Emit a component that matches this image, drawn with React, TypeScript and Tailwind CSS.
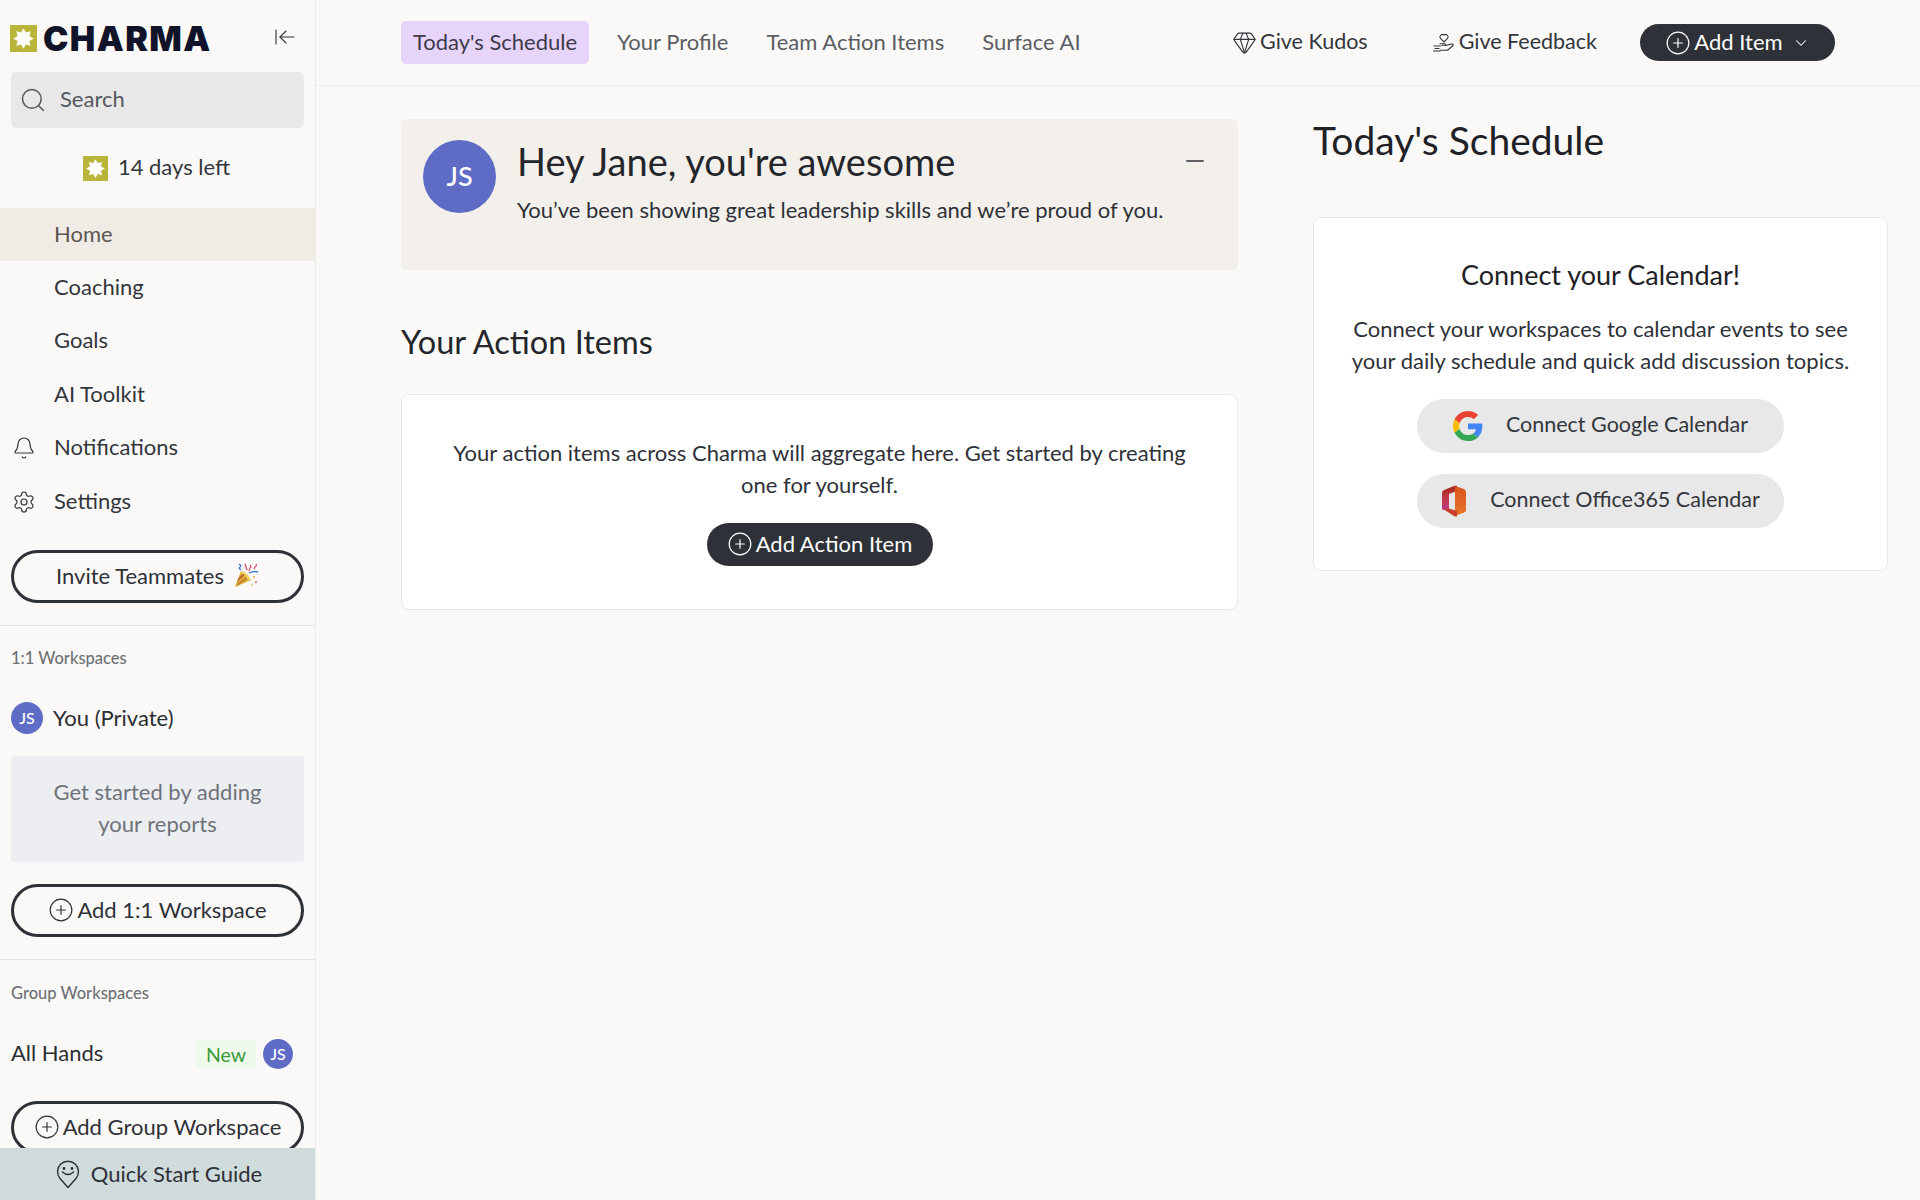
import React from "react";
import { Search, ArrowLeftToLine, Bell, Settings, CirclePlus, Gem, ChevronDown, Minus } from "lucide-react";

function Star({ size, color }: { size: number; color: string }) {
  const pts: string[] = [];
  for (let i = 0; i < 16; i++) {
    const r = i % 2 === 0 ? 10.5 : 6.6;
    const a = (Math.PI * 2 * i) / 16 - Math.PI / 2;
    pts.push(`${(14 + r * Math.cos(a)).toFixed(2)},${(14 + r * Math.sin(a)).toFixed(2)}`);
  }
  return (
    <svg width={size} height={size} viewBox="0 0 28 28" className="shrink-0">
      <rect width="28" height="28" fill={color} />
      <polygon points={pts.join(" ")} fill="#ffffff" />
    </svg>
  );
}

function Avatar({ cls }: { cls: string }) {
  return <div className={`flex items-center justify-center rounded-full bg-[#5f6cc6] text-white shrink-0 ${cls}`}>JS</div>;
}

function Popper() {
  return (
    <svg width="26" height="26" viewBox="0 0 26 26" className="shrink-0">
      <path d="M2 24 L8 8 Q14 9 18 17 Z" fill="#e3b23a" />
      <path d="M5.500 15 L11 9.500 L13 11 L4 19 Z" fill="#b9682e" />
      <path d="M3.500 21 L14.500 13 L16 15 L4.500 23 Z" fill="#c9812f" />
      <path d="M8 8 Q14 9 18 17 L15 17 Q12 11 8 10 Z" fill="#f2d26a" />
      <path d="M6 1 q3 2 1 3 q-2 1 1 3" stroke="#3f6fd0" strokeWidth="1.3" fill="none" />
      <path d="M12 1 l2 6" stroke="#d8486a" strokeWidth="1.3" />
      <path d="M17 2 q2 2 0 3 l-1 3" stroke="#d8486a" strokeWidth="1.2" fill="none" />
      <path d="M23 1 q1 2 -1 3 l-1 2" stroke="#d8486a" strokeWidth="1.2" fill="none" />
      <path d="M16 10 q5 -2 9 -1" stroke="#3f6fd0" strokeWidth="1.3" fill="none" />
      <circle cx="21" cy="14" r="1" fill="#e3a92f" />
      <circle cx="23" cy="19" r="0.9" fill="#d8486a" />
      <circle cx="19" cy="22" r="0.8" fill="#e3a92f" />
    </svg>
  );
}

function Google() {
  return (
    <svg width="30" height="30" viewBox="0 0 48 48" className="shrink-0">
      <path fill="#EA4335" d="M24 9.5c3.5 0 6.700 1.200 9.200 3.600l6.900-6.900C35.900 2.400 30.500 0 24 0 14.600 0 6.500 5.400 2.600 13.200l8 6.200C12.500 13.700 17.800 9.500 24 9.500z" />
      <path fill="#4285F4" d="M47 24.500c0-1.600-.1-3.100-.4-4.500H24v9h12.900c-.6 3-2.200 5.500-4.800 7.200l7.700 6C44.300 38 47 31.800 47 24.500z" />
      <path fill="#FBBC05" d="M10.600 28.600c-.5-1.400-.8-3-.8-4.600s.3-3.200.8-4.600l-8-6.200C.900 16.500 0 20.100 0 24s.9 7.500 2.600 10.800l8-6.200z" />
      <path fill="#34A853" d="M24 48c6.500 0 11.900-2.100 15.900-5.800l-7.700-6c-2.200 1.400-4.900 2.300-8.200 2.300-6.200 0-11.500-4.200-13.400-9.900l-8 6.200C6.500 42.600 14.600 48 24 48z" />
    </svg>
  );
}

function Office() {
  return (
    <svg width="26" height="32" viewBox="0 0 26 32" className="shrink-0">
      <defs>
        <linearGradient id="o1" x1="0" y1="0" x2="0" y2="1">
          <stop offset="0" stopColor="#a8281c" />
          <stop offset="0.55" stopColor="#c23a4a" />
          <stop offset="1" stopColor="#b83a8c" />
        </linearGradient>
        <linearGradient id="o2" x1="0" y1="0" x2="0" y2="1">
          <stop offset="0" stopColor="#d9541e" />
          <stop offset="1" stopColor="#e9742a" />
        </linearGradient>
      </defs>
      <path d="M1 8 Q1 6 3 5 L13 1 Q15 0 16 1 L16 6 L8 9 L8 24 L2 25 Q1 25 1 23 Z" fill="url(#o1)" />
      <path d="M14 1 L23 4 Q25 5 25 7 L25 25 Q25 27 23 27.500 L14 31 Z" fill="url(#o2)" />
      <path d="M2 24 L8 23.500 L16 26 L16 31 Q15 32 13 31 Z" fill="#c8402a" />
    </svg>
  );
}

function HandIcon() {
  return (
    <svg width="24" height="24" viewBox="0 0 24 24" fill="none" stroke="#33363c" strokeWidth="1.1" strokeLinecap="round" strokeLinejoin="round" className="shrink-0">
      <path d="M12 11 L8.300 7.200 A2.400 2.400 0 0 1 12 4.200 A2.400 2.400 0 0 1 15.700 7.200 Z" />
      <path d="M8 12.800 H12 Q14 12.800 14 14.300 H10" />
      <path d="M14 14.500 L19 13 Q21.500 12.800 21 14.500 L16.500 18.500 Q15.500 19.300 14 19.300 H8" />
      <path d="M2 15 H8.500" />
      <path d="M3 17.500 H7" />
      <path d="M1.500 20 H8" />
    </svg>
  );
}

function QuickIcon() {
  return (
    <svg width="24" height="30" viewBox="0 0 24 30" fill="none" stroke="#2e3138" strokeWidth="1.4" strokeLinecap="round" className="shrink-0">
      <path d="M12 28.500 L4 19.500 A10.500 10.500 0 1 1 20 19.500 Z" strokeLinejoin="round" />
      <circle cx="8" cy="9.500" r="0.700" fill="#2e3138" />
      <circle cx="16" cy="9.500" r="0.700" fill="#2e3138" />
      <path d="M6.500 13 q5.500 5 11 0" />
    </svg>
  );
}

function NavRow({ label, active, icon }: { label: string; active?: boolean; icon?: React.ReactNode }) {
  return (
    <div className={`relative flex h-[53.4px] items-center pl-[54px] text-[22px] ${active ? "bg-[#f1ebe5] text-[#5c5650]" : "text-[#33363c]"}`}>
      {icon && <span className="absolute left-[12px] flex items-center">{icon}</span>}
      <span className="pb-[3px]">{label}</span>
    </div>
  );
}

function OutlineBtn({ children, cls }: { children: React.ReactNode; cls?: string }) {
  return (
    <div className={`mx-[11px] flex h-[53px] shrink-0 items-center justify-center rounded-full border-[3px] border-[#2e3138] pb-[2px] text-[22px] text-[#2e3138] ${cls ?? ""}`}>
      {children}
    </div>
  );
}

function Sidebar() {
  return (
    <aside className="relative flex h-[1200px] w-[316px] shrink-0 flex-col overflow-hidden border-r border-[#ecebe9]">
      <div className="flex h-[72px] shrink-0 items-start justify-between pl-[10px] pr-[18px] pt-[25px]">
        <div className="flex items-center gap-[6px]">
          <Star size={27} color="#b9b53a" />
          <span className="font-['Inter',sans-serif] text-[34px] font-black leading-[27px] tracking-[1.4px] text-[#10132a]">CHARMA</span>
        </div>
        <ArrowLeftToLine size={24} strokeWidth={1.1} className="text-[#2e3138]" />
      </div>
      <div className="mx-[11px] flex h-[56px] shrink-0 items-center gap-[13px] rounded-md bg-[#e8e8e8] pl-[8px] text-[22px] text-[#55585e]">
        <Search size={28} strokeWidth={1.3} />
        <span className="pb-[4px]">Search</span>
      </div>
      <div className="flex h-[80px] shrink-0 items-center justify-center gap-[10px] pr-[2px] text-[22px] text-[#33363c]">
        <Star size={25} color="#b9b53a" />
        <span className="pb-[3px]">14 days left</span>
      </div>
      <NavRow label="Home" active />
      <NavRow label="Coaching" />
      <NavRow label="Goals" />
      <NavRow label="AI Toolkit" />
      <NavRow label="Notifications" icon={<Bell size={24} strokeWidth={1.2} />} />
      <NavRow label="Settings" icon={<Settings size={24} strokeWidth={1.2} />} />
      <OutlineBtn cls="mt-[22px] gap-[9px]">
        Invite Teammates <Popper />
      </OutlineBtn>
      <div className="mt-[22px] h-px shrink-0 bg-[#e4e3e1]" />
      <div className="flex h-[67px] shrink-0 items-center pb-[3px] pl-[11px] text-[16.5px] font-medium text-[#6e7076]">1:1 Workspaces</div>
      <div className="flex h-[50px] shrink-0 items-center gap-[10px] pl-[11px] text-[22px] text-[#2b2e33]">
        <Avatar cls="h-[32px] w-[32px] text-[16px] font-medium" />
        <span className="pb-[2px]">You (Private)</span>
      </div>
      <div className="mx-[11px] mt-[13px] flex h-[106px] shrink-0 items-center justify-center rounded-sm bg-[#eceef1] px-[32px] pb-[2px] text-center text-[22px] leading-[32px] text-[#6e737a]">
        Get started by adding your reports
      </div>
      <OutlineBtn cls="mt-[22px] gap-[3px]">
        <CirclePlus size={26} strokeWidth={1.1} /> Add 1:1 Workspace
      </OutlineBtn>
      <div className="mt-[22px] h-px shrink-0 bg-[#e4e3e1]" />
      <div className="flex h-[68px] shrink-0 items-center pb-[2px] pl-[11px] text-[16.5px] font-medium text-[#6e7076]">Group Workspaces</div>
      <div className="flex h-[52px] shrink-0 items-center pl-[11px] pr-[22px] text-[22px] text-[#2b2e33]">
        <span className="flex-1 pb-[4px]">All Hands</span>
        <span className="flex h-[28px] w-[60px] items-center justify-center bg-[#eefaec] text-[19.5px] text-[#3e9a3c]">New</span>
        <Avatar cls="ml-[7px] h-[30px] w-[30px] text-[16px] font-medium shadow-[0_0_0_1px_#fff]" />
      </div>
      <OutlineBtn cls="mt-[21px] gap-[3px]">
        <CirclePlus size={26} strokeWidth={1.1} /> Add Group Workspace
      </OutlineBtn>
      <div className="absolute bottom-0 left-0 right-0 flex h-[52px] items-center justify-center gap-[11px] bg-[#d0dbdc] pl-[3px] text-[22px] text-[#2e3138]">
        <QuickIcon />
        <span className="pb-[2px]">Quick Start Guide</span>
      </div>
    </aside>
  );
}

function Header() {
  return (
    <header className="flex h-[86px] shrink-0 items-center border-b border-[#ecebe9] pl-[85px] text-[22px] text-[#5a5d63]">
      <div className="flex h-[43px] w-[188px] items-center justify-center rounded-[5px] bg-[#e6d4fb] pb-[2px] text-[#3c3a48]">Today's Schedule</div>
      <span className="ml-[28px] pb-[2px]">Your Profile</span>
      <span className="ml-[38px] pb-[2px]">Team Action Items</span>
      <span className="ml-[38px] pb-[2px]">Surface AI</span>
      <div className="flex flex-1 items-center justify-end pr-[85px] text-[21.5px] text-[#33363c]">
        <Gem size={25} strokeWidth={1.1} />
        <span className="ml-[3px] pb-[2px]">Give Kudos</span>
        <span className="ml-[64px]"><HandIcon /></span>
        <span className="ml-[3px] pb-[2px]">Give Feedback</span>
        <div className="ml-[43px] flex h-[37px] w-[195px] items-center justify-center gap-[3px] rounded-full bg-[#2e3138] text-[22px] text-white">
          <CirclePlus size={26} strokeWidth={1.1} />
          <span className="pb-[2px]">Add Item</span>
          <ChevronDown size={18} strokeWidth={1.4} className="ml-[6px]" />
        </div>
      </div>
    </header>
  );
}

function Main() {
  return (
    <div className="flex gap-[75px] pl-[85px] pr-[31px] pt-[33px]">
      <div className="w-[837px] shrink-0">
        <div className="relative flex h-[151px] rounded-md bg-[#f3f0ec] pl-[22px] pt-[21px]">
          <Avatar cls="h-[73px] w-[73px] text-[27px] font-medium" />
          <div className="ml-[21px]">
            <div className="text-[38px] leading-[42px] text-[#24262b]">Hey Jane, you're awesome</div>
            <div className="mt-[14px] text-[22px] leading-[28px] text-[#2e3138]">You’ve been showing great leadership skills and we’re proud of you.</div>
          </div>
          <Minus size={28} strokeWidth={1.4} className="absolute right-[29px] top-[28px] text-[#2e3138]" />
        </div>
        <h2 className="mt-[52px] text-[32.500px] leading-[40px] text-[#24262b]">Your Action Items</h2>
        <div className="mt-[32px] flex h-[216px] flex-col items-center rounded-lg border border-[#e9e8e6] bg-white px-[40px] pt-[42px] text-center text-[22px] leading-[32px] text-[#2e3138]">
          <div>Your action items across Charma will aggregate here. Get started by creating one for yourself.</div>
          <div className="mt-[22px] flex h-[43px] w-[226px] items-center justify-center gap-[3px] rounded-full bg-[#2e3138] pb-[1px] text-[22px] text-white">
            <CirclePlus size={26} strokeWidth={1.1} />
            Add Action Item
          </div>
        </div>
      </div>
      <div className="w-[575px] shrink-0">
        <h2 className="text-[39px] leading-[43px] text-[#1f2126]">Today's Schedule</h2>
        <div className="mt-[55px] flex h-[354px] flex-col items-center rounded-lg border border-[#e9e8e6] bg-white px-[30px] pt-[40px] text-center">
          <div className="text-[27px] leading-[34px] text-[#1f2126]">Connect your Calendar!</div>
          <div className="mt-[21px] text-[22px] leading-[32px] text-[#2e3138]">Connect your workspaces to calendar events to see your daily schedule and quick add discussion topics.</div>
          <div className="mt-[22px] flex h-[54px] w-[367px] items-center justify-center gap-[23px] rounded-full bg-[#e8e8e8] text-[21.5px] text-[#33363c]">
            <Google /> <span className="pb-[3px]">Connect Google Calendar</span>
          </div>
          <div className="mt-[21px] flex h-[54px] w-[367px] items-center justify-center gap-[23px] rounded-full bg-[#e8e8e8] text-[21.5px] text-[#33363c]">
            <Office /> <span className="pb-[3px]">Connect Office365 Calendar</span>
          </div>
        </div>
      </div>
    </div>
  );
}

export default function App() {
  return (
    <div className="flex h-[1200px] w-[1920px] overflow-hidden bg-[#faf9f7] font-['Lato','Noto_Sans',sans-serif]">
      <Sidebar />
      <div className="flex-1">
        <Header />
        <Main />
      </div>
    </div>
  );
}
